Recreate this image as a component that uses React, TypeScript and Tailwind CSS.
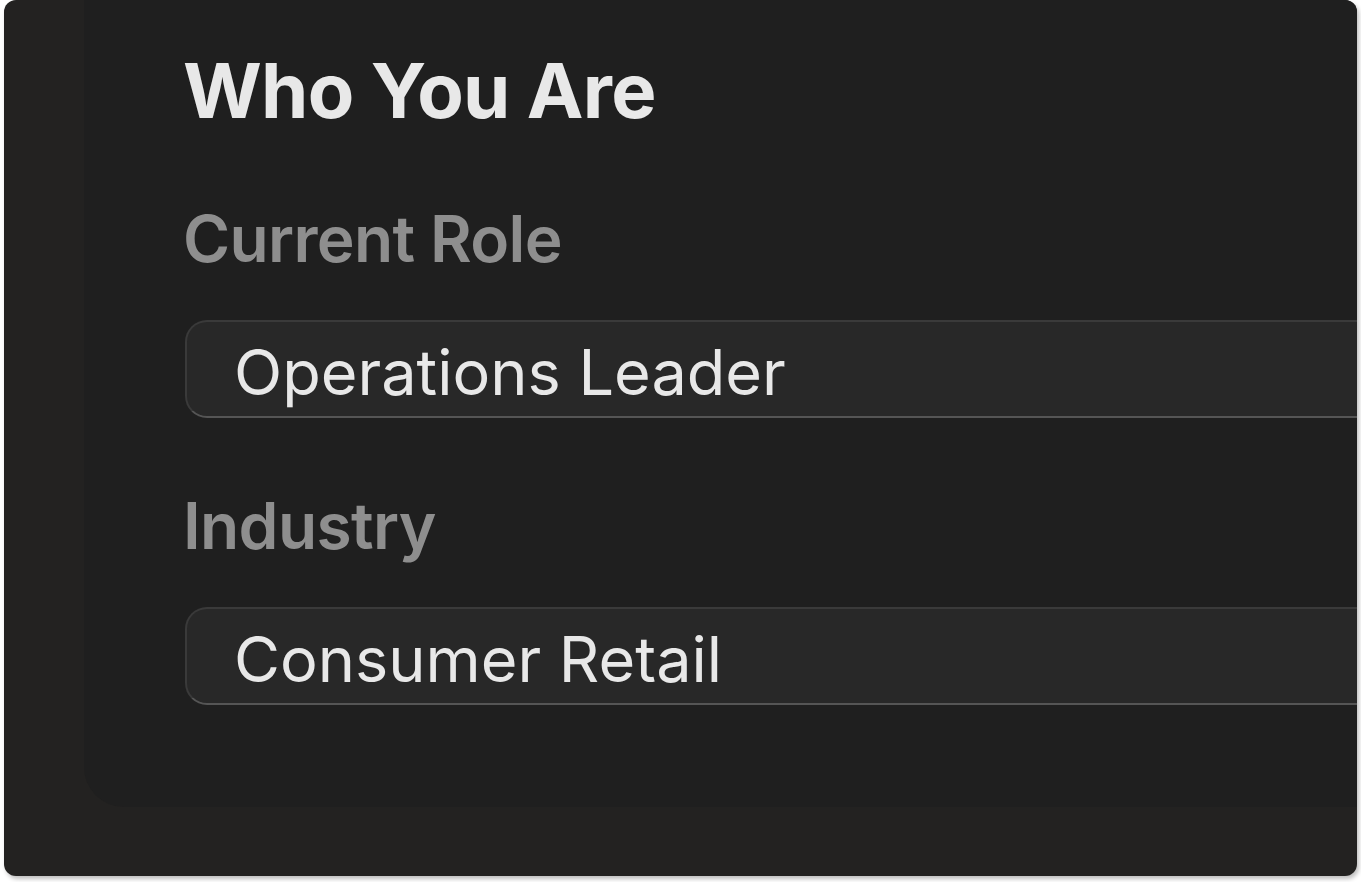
const FIELDS = [
  { label: "Current Role", value: "Operations Leader" },
  { label: "Industry", value: "Consumer Retail" },
];

function Field({ label, value, first }: { label: string; value: string; first?: boolean }) {
  return (
    <div className={first ? "mt-[79px]" : "mt-[76px]"}>
      <div className="text-[64px] font-semibold leading-none tracking-[-0.01em] text-[#8e8e8e]">{label}</div>
      <div className="ml-[2px] mt-[49px] flex h-[98px] w-[1300px] shrink-0 items-center rounded-[22px] border-2 border-[#3a3a3a] border-b-[#555555] bg-[#282828] pl-[47px] pt-[6px]">
        <span className="text-[63px] leading-none text-[#e8e8e8]">{value}</span>
      </div>
    </div>
  );
}

export default function App() {
  return (
    <div className="h-[882px] w-[1361px] bg-white px-[4px] pb-[6px] font-['Inter','Liberation_Sans',sans-serif]">
      <div className="flex h-[876px] overflow-hidden rounded-[12px] bg-[#232221] pb-[69px] pl-[80px] shadow-[2px_3px_4px_rgba(0,0,0,0.25)]">
        <div className="flex-1 overflow-hidden rounded-bl-[40px] bg-[#1f1f1f] pl-[99px] pt-[52px]">
          <h1 className="text-[76px] font-bold leading-none tracking-[-0.01em] text-[#e8e8e8]">Who You Are</h1>
          {FIELDS.map((f, i) => (
            <Field key={f.label} label={f.label} value={f.value} first={i === 0} />
          ))}
        </div>
      </div>
    </div>
  );
}
